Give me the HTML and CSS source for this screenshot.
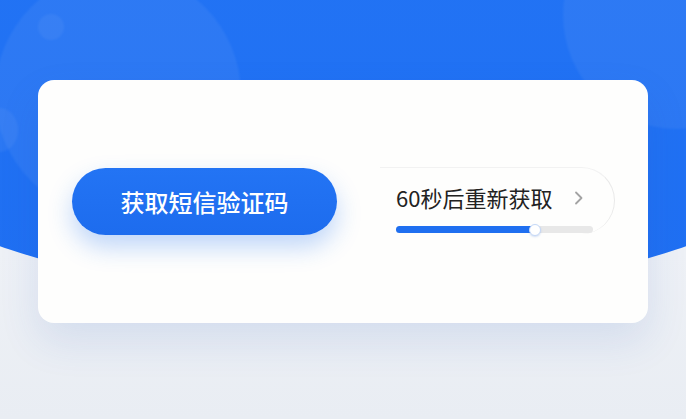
FILE: index.html
```html
<!DOCTYPE html>
<html lang="zh-CN">
<head>
<meta charset="utf-8">
<title>获取短信验证码</title>
<link rel="stylesheet" href="styles.css">
</head>
<body>
<div class="stage">
  <div class="hero">
    <span class="bubble bubble-a"></span>
    <span class="bubble bubble-b"></span>
    <span class="bubble bubble-c"></span>
    <span class="bubble bubble-d"></span>
  </div>
  <div class="card">
    <button class="sms-btn" type="button">获取短信验证码</button>
    <div class="countdown">
      <div class="countdown-row">
        <span class="countdown-text">60秒后重新获取</span>
        <svg class="chevron" width="10" height="14" viewBox="0 0 10 14"><path d="M2 1.5 L7.5 7 L2 12.5" fill="none" stroke="#a3a3a3" stroke-width="1.8" stroke-linecap="round" stroke-linejoin="round"/></svg>
      </div>
      <div class="progress">
        <div class="progress-fill" style="width:70.5%"></div>
        <span class="progress-knob"></span>
      </div>
    </div>
  </div>
</div>
</body>
</html>
```
FILE: styles.css
```css
html, body {
  margin: 0;
  padding: 0;
}
body {
  width: 686px;
  height: 419px;
  overflow: hidden;
  font-family: "Noto Sans CJK SC", "Noto Sans", sans-serif;
  background: linear-gradient(180deg, #f1f4f9 0%, #eef1f6 60%, #e9edf3 100%);
}
.stage {
  position: relative;
  width: 686px;
  height: 419px;
  overflow: hidden;
  display: flex;
  flex-direction: column;
}
.hero {
  position: absolute;
  left: -257px;
  top: -300px;
  width: 1200px;
  height: 600px;
  border-radius: 50%;
  background: linear-gradient(180deg, #2476f6 0%, #1f6ff2 100%);
  overflow: hidden;
}
.bubble {
  position: absolute;
  border-radius: 50%;
  background: rgba(255, 255, 255, 0.055);
  filter: blur(1px);
}
.bubble-a {
  left: calc(257px - 5px);
  top: calc(300px - 29px);
  width: 246px;
  height: 246px;
}
.bubble-b {
  left: calc(257px + 563px);
  top: calc(300px - 99px);
  width: 228px;
  height: 228px;
}
.bubble-c {
  left: calc(257px + 38px);
  top: calc(300px + 14px);
  width: 26px;
  height: 26px;
  background: rgba(255, 255, 255, 0.05);
}
.bubble-d {
  left: calc(257px - 18px);
  top: calc(300px + 108px);
  width: 36px;
  height: 44px;
  background: rgba(255, 255, 255, 0.05);
}
.card {
  position: relative;
  margin: 80px 0 0 38px;
  width: 610px;
  height: 243px;
  box-sizing: border-box;
  background: #fefefd;
  border-radius: 16px;
  box-shadow: 0 18px 40px rgba(40, 90, 190, 0.12);
  display: flex;
  align-items: center;
  padding-left: 34px;
  gap: 43px;
}
.sms-btn {
  width: 265px;
  height: 67px;
  border: none;
  border-radius: 34px;
  background: linear-gradient(180deg, #2374f4 0%, #1d6cee 100%);
  color: #ffffff;
  font-family: "Noto Sans CJK SC", sans-serif;
  font-size: 24px;
  font-weight: 500;
  letter-spacing: 0;
  box-shadow: 0 12px 24px rgba(30, 110, 240, 0.28);
  padding: 0;
  cursor: pointer;
}
.countdown {
  width: 235px;
  height: 67px;
  box-sizing: border-box;
  margin-top: -2px;
  padding: 16px 0 1px 16px;
  border-top: 1px solid #f2f2f2;
  border-right: 1px solid #e9e9e9;
  border-radius: 0 34px 34px 0;
  display: flex;
  flex-direction: column;
}
.countdown-row {
  display: flex;
  align-items: center;
  height: 26px;
  padding-right: 30px;
}
.countdown-text {
  font-size: 22px;
  line-height: 26px;
  color: #222222;
  flex: 1;
}
.chevron {
  display: block;
  margin-top: 1px;
}
.progress {
  position: relative;
  margin-top: 16px;
  width: 197px;
  height: 7px;
  border-radius: 4px;
  background: #e8e8e8;
}
.progress-fill {
  height: 7px;
  border-radius: 4px;
  background: #1f6ff0;
}
.progress-knob {
  position: absolute;
  left: calc(70.5% - 6px);
  top: -2.5px;
  width: 10px;
  height: 10px;
  border-radius: 50%;
  background: #ffffff;
  border: 1px solid #c5d8f7;
  box-shadow: 0 1px 2px rgba(30, 90, 200, 0.2);
}
```
